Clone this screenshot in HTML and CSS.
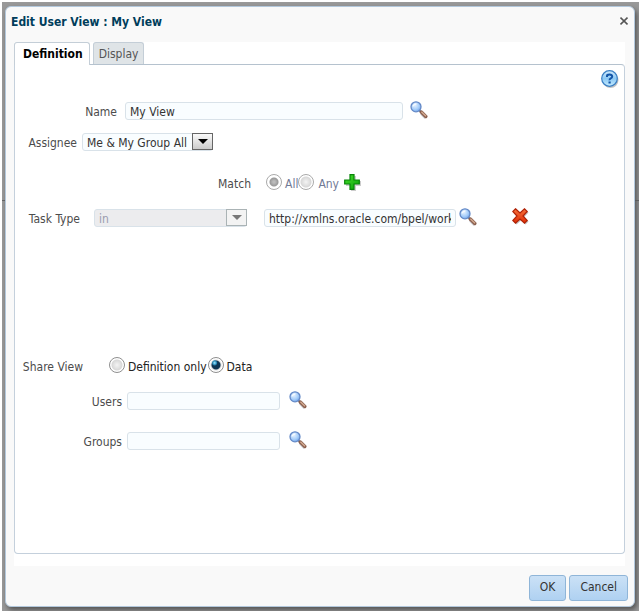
FILE: index.html
```html
<!DOCTYPE html>
<html lang="en">
<head>
<meta charset="utf-8">
<title>Edit User View</title>
<link rel="stylesheet" href="styles.css">
</head>
<body>
<svg class="defs" width="0" height="0" aria-hidden="true">
  <defs>
    <radialGradient id="lens" cx="0.4" cy="0.35" r="0.7"><stop offset="0" stop-color="#e4f1ff"/><stop offset="0.6" stop-color="#a5cdfa"/><stop offset="1" stop-color="#6d9fe6"/></radialGradient>
    <linearGradient id="helpFill" x1="0" y1="0" x2="0" y2="1"><stop offset="0" stop-color="#d2ebfc"/><stop offset="0.5" stop-color="#8cc8f4"/><stop offset="1" stop-color="#c4ecff"/></linearGradient>
    <linearGradient id="plusFill" x1="0" y1="0" x2="1" y2="1"><stop offset="0" stop-color="#4be02e"/><stop offset="1" stop-color="#06a006"/></linearGradient>
    <linearGradient id="crossFill" x1="0" y1="0" x2="0" y2="1"><stop offset="0" stop-color="#f5703a"/><stop offset="1" stop-color="#e02c05"/></linearGradient>
    <symbol id="search" viewBox="0 0 18 18">
      <path d="M11 12.500 15.500 17" stroke="#b9bcc4" stroke-width="2.500" opacity=".7"/>
      <path d="M9.300 9.300 11.500 11.500" stroke="#6e7f9c" stroke-width="2"/>
      <path d="M11.300 11 15.800 15.500" stroke="#8a5f4e" stroke-width="3.400" stroke-linecap="round"/>
      <path d="M11.400 10.700 16 15.300" stroke="#d3ab92" stroke-width="1.400"/>
      <circle cx="6" cy="5.800" r="5" fill="url(#lens)" stroke="#6388c6" stroke-width="1.300"/>
      <path d="M3 5.500Q3.500 3 6.500 2.800" fill="none" stroke="#fff" stroke-width="1.200" opacity=".8"/>
    </symbol>
  </defs>
</svg>
<main class="backdrop">
  <section class="dialog" role="dialog" aria-labelledby="title">
    <header class="titlebar">
      <h1 id="title">Edit User View : My View</h1>
      <button class="icon-btn" type="button" aria-label="Close">
        <svg width="8" height="14" viewBox="0 0 8 14"><path d="M.500 3.500 7.500 10.500M7.500 3.500 .500 10.500" stroke="#555" stroke-width="1.600"/></svg>
      </button>
    </header>
    <form class="content">
      <div class="tabs" role="tablist">
        <button class="tab active" type="button" role="tab" aria-selected="true">Definition</button>
        <button class="tab" type="button" role="tab" aria-selected="false">Display</button>
      </div>
      <div class="panel" role="tabpanel">
        <div class="help">
          <button class="icon-btn" type="button" aria-label="Help">
            <svg width="18" height="18" viewBox="0 0 18 18"><circle cx="9.500" cy="10" r="8" fill="#a9a9a9" opacity=".7"/><circle cx="8.500" cy="8.500" r="7.800" fill="url(#helpFill)" stroke="#3a7fc4" stroke-width="1.200"/><path d="M6 7V6Q6 4.600 8.600 4.600T11.200 6.500Q11.200 7.700 9.800 8.400T8.600 10.200" fill="none" stroke="#1255a8" stroke-width="2"/><path d="M7.500 11.500h2.200v2H7.500z" fill="#1255a8"/></svg>
          </button>
        </div>
        <div class="row name-row">
          <label for="name">Name</label>
          <input class="box wide" id="name" type="text" value="My View">
          <button class="icon-btn" type="button" aria-label="Search names"><svg width="18" height="18"><use href="#search"/></svg></button>
        </div>
        <div class="row assignee-row">
          <label for="assignee">Assignee</label>
          <span class="select"><select class="box" id="assignee"><option>Me &amp; My Group All</option></select></span>
        </div>
        <div class="row match-row" role="radiogroup" aria-labelledby="match">
          <span class="label" id="match">Match</span>
          <label class="choice muted"><input type="radio" name="match" checked disabled>All</label>
          <label class="choice muted"><input type="radio" name="match" disabled>Any</label>
          <button class="icon-btn" type="button" aria-label="Add condition">
            <svg width="17" height="17" viewBox="0 0 17 17"><path d="M7 2h5v5h5v5h-5v5H7v-5H2V7h5z" fill="#999" opacity=".5"/><path d="M6 .7h4v5.300h5.300v4H10v5.300H6V10H.700V6H6z" fill="url(#plusFill)" stroke="#078507" stroke-width="1.200"/></svg>
          </button>
        </div>
        <div class="row task-row">
          <label for="operator">Task Type</label>
          <span class="select disabled"><select class="box" id="operator" disabled><option>in</option></select></span>
          <input class="box medium" type="text" aria-label="Task type value" value="http://xmlns.oracle.com/bpel/workflow">
          <button class="icon-btn" type="button" aria-label="Search task types"><svg width="18" height="18"><use href="#search"/></svg></button>
          <button class="icon-btn remove" type="button" aria-label="Remove condition">
            <svg width="17" height="17" viewBox="0 0 17 17"><path d="M4 1 8.500 5.300 13 1 16.500 4.500 12.300 9 16.500 13.500 13.500 16.500 9 12.500 4.500 16.500 1.500 13.500 5.300 9 1.500 4.500z" fill="#999" opacity=".6"/><path d="M3.500.800 8 5 12.500.800 15.200 3.500 11 8 15.200 12.500 12.500 15.200 8 11 3.500 15.200.800 12.500 5 8 .800 3.500z" fill="url(#crossFill)" stroke="#b12408" stroke-width="1.200"/></svg>
          </button>
        </div>
        <div class="row share-row" role="radiogroup" aria-labelledby="share">
          <span class="label" id="share">Share View</span>
          <label class="choice"><input type="radio" name="share">Definition only</label>
          <label class="choice"><input type="radio" name="share" checked>Data</label>
        </div>
        <div class="row people-row">
          <label for="users">Users</label>
          <input class="box narrow" id="users" type="text">
          <button class="icon-btn" type="button" aria-label="Search users"><svg width="18" height="18"><use href="#search"/></svg></button>
        </div>
        <div class="row people-row groups-row">
          <label for="groups">Groups</label>
          <input class="box narrow" id="groups" type="text">
          <button class="icon-btn" type="button" aria-label="Search groups"><svg width="18" height="18"><use href="#search"/></svg></button>
        </div>
      </div>
    </form>
    <footer class="actions">
      <button class="action" type="button">OK</button>
      <button class="action" type="button">Cancel</button>
    </footer>
  </section>
</main>
</body>
</html>
```
FILE: styles.css
```css
*, *::before, *::after { box-sizing: border-box; }
body, button, input, select { font: 12px/16px "DejaVu Sans Condensed", "Noto Sans", sans-serif; }
body { margin: 2px; background: #fff; color: #333; }
button, input, select { margin: 0; }
.defs { display: block; }

.backdrop {
  padding: 4px 4px 4px 3px;
  background: linear-gradient(#666, #666) 0 198px / 100% 1px no-repeat, #999;
}
.dialog {
  border: 1px solid #b3c8dc;
  border-radius: 6px;
  background: #f9f9f9;
  box-shadow: 2px 3px 5px #555;
}
.titlebar { display: flex; justify-content: space-between; align-items: flex-start; padding: 7px 6px 12px 5px; }
.titlebar h1 { margin: 0; font-size: 12px; line-height: 16px; color: #003d5b; }
.icon-btn { display: block; padding: 0; border: 0; background: none; line-height: 0; cursor: pointer; }
.icon-btn svg { display: block; }

.content { margin: 0 9px 0 8px; padding-bottom: 12px; background: #fff; }
.tabs { display: flex; gap: 3px; }
.tab {
  height: 22px;
  padding: 0 5px;
  border: 1px solid #c4ced7;
  border-bottom: 0;
  border-radius: 3px 3px 0 0;
  background: #dfe4e7;
  color: #555;
}
.tab.active { height: 23px; margin-bottom: -1px; padding: 0 6px 0 8px; background: #fff; color: #000; font-weight: bold; position: relative; }
.panel { padding-bottom: 102px; border: 1px solid #c4d0dc; border-top-color: #b5c2ce; border-radius: 0 4px 4px 4px; }
.help { display: flex; justify-content: flex-end; padding: 5px 5px 13px; }

.row { display: flex; align-items: flex-start; height: 20px; }
.row > label:first-child, .label { flex: none; padding-top: 3px; color: #4c4c4c; text-align: right; }
.box {
  height: 18px;
  margin-top: 1px;
  padding: 1px 4px 0;
  border: 1px solid #d9e2e9;
  border-radius: 3px;
  background: #f9fdff;
  color: #333;
}
.wide { width: 278px; }
.medium { width: 192px; }
.narrow { width: 153px; }

.select { position: relative; width: 131px; }
.select select { display: block; width: 100%; appearance: none; opacity: 1; }
.select::before {
  content: "";
  position: absolute;
  top: 1px;
  right: 0;
  width: 21px;
  height: 17px;
  border: 1px solid #666;
  background: linear-gradient(#fafafa, #ccc);
  pointer-events: none;
}
.select::after {
  content: "";
  position: absolute;
  top: 7px;
  right: 5px;
  border: 5px solid transparent;
  border-top-color: #000;
  border-bottom: 0;
  pointer-events: none;
}
.select.disabled { width: 153px; }
.disabled select { background: #ececee; color: #9a9cae; }
.disabled::before { border-color: #aab3b5; background: #f3f3f3; }
.disabled::after { border-top-color: #777; }

.choice { display: flex; gap: 3px; line-height: 22px; color: #222; }
.choice.muted { color: #717a96; }
.choice input {
  appearance: none;
  width: 16px;
  height: 16px;
  margin-top: 1px;
  border: 1px solid #8f8f8f;
  border-radius: 50%;
  background: radial-gradient(circle at 50% 50%, #f4f4f4, #d8d8d8 5px, #fff 6px);
}
.choice input:checked { background: radial-gradient(circle at 40% 35%, #a5ecff 0, #2689b8 2px, transparent 3px), radial-gradient(circle, #0d3553 4px, #ddd 5px, #fff 6px); }
.choice input:disabled { border-color: #aaa; }
.choice input:checked:disabled { background: radial-gradient(circle, #bbb 1px, #999 4px, #fff 5px); }

.name-row > label { width: 102px; margin-right: 8px; }
.name-row .icon-btn { margin-left: 7px; }
.assignee-row { margin-top: 11px; }
.assignee-row > label { width: 62px; margin-right: 5px; }
.match-row { margin-top: 21px; }
.match-row .label { width: 236px; margin-right: 15px; }
.match-row .icon-btn { margin: 1px 0 0 5px; }
.match-row .choice + .choice { gap: 4px; }
.task-row { margin-top: 15px; }
.task-row > label { width: 65px; margin-right: 14px; }
.task-row .medium { margin: 1px 3px 0 17px; }
.task-row .remove { margin-left: 35px; }
.share-row { margin-top: 128px; }
.share-row .label { width: 68px; margin-right: 26px; }
.share-row .choice { margin-right: 1px; }
.people-row { margin-top: 15px; }
.people-row > label { width: 107px; margin-right: 5px; }
.people-row .icon-btn { margin-left: 9px; }
.groups-row { margin-top: 20px; }

.actions { display: flex; justify-content: flex-end; gap: 3px; padding: 9px 6px 5px; }
.action {
  height: 26px;
  padding: 0 10px 2px;
  border: 1px solid #8fb5d8;
  border-radius: 3px;
  background: linear-gradient(#cbe1f6, #afd1f1);
  color: #333;
}
```
